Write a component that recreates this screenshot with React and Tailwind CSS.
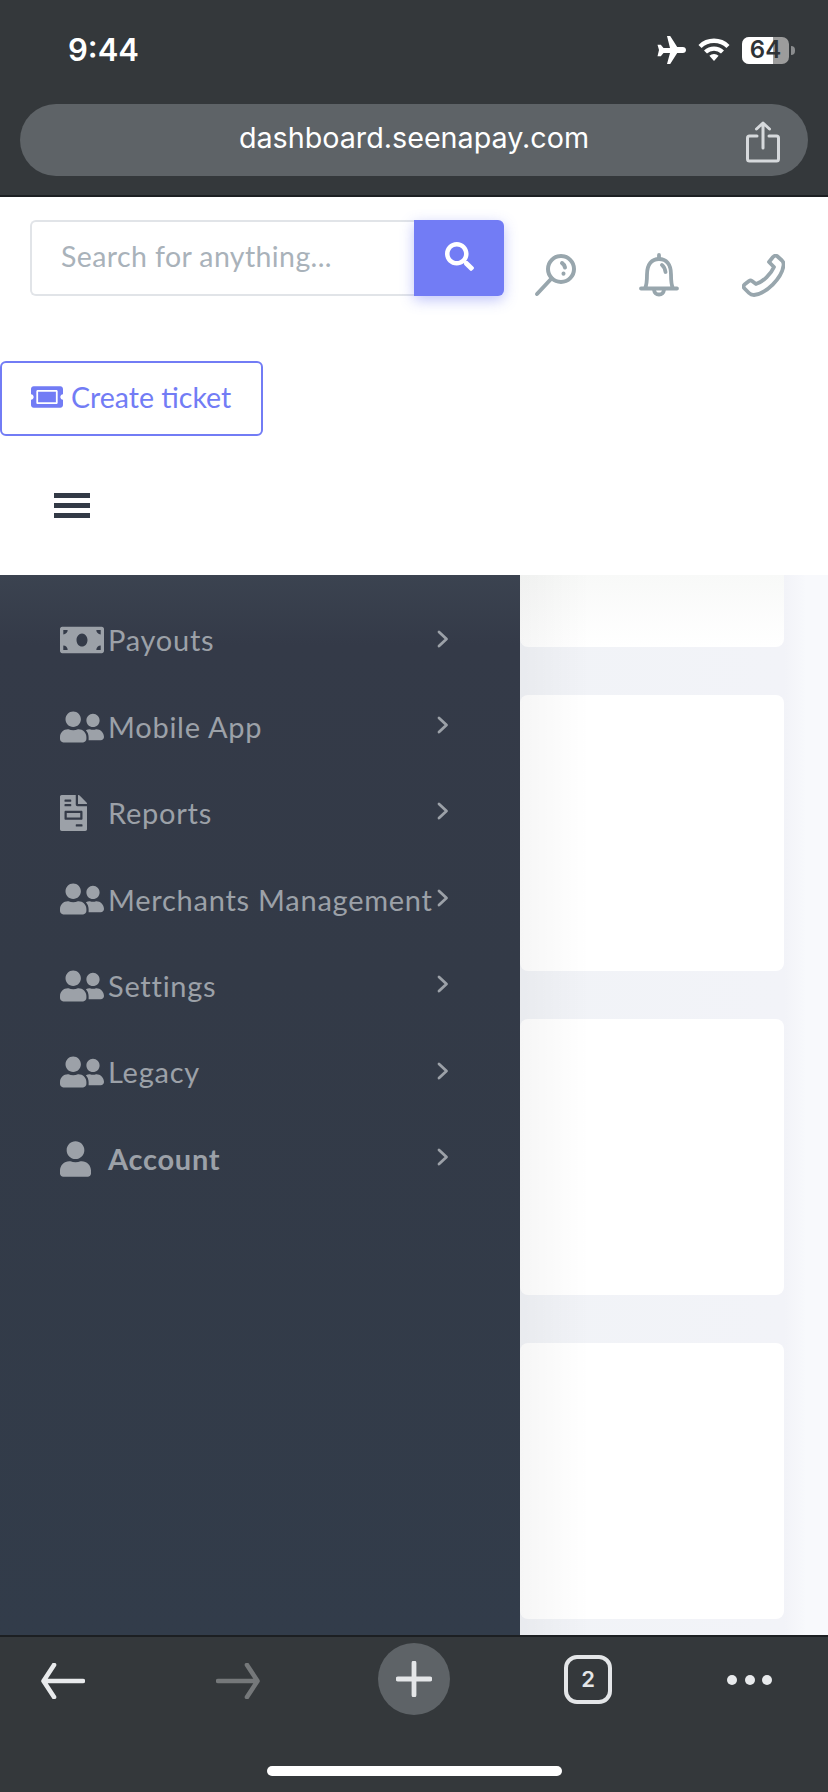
import { FaMoneyBill, FaUserFriends, FaFileInvoice, FaUser, FaSearch, FaTicketAlt } from "react-icons/fa";

const menu = [
  { label: "Payouts", icon: FaMoneyBill },
  { label: "Mobile App", icon: FaUserFriends },
  { label: "Reports", icon: FaFileInvoice, small: true },
  { label: "Merchants Management", icon: FaUserFriends },
  { label: "Settings", icon: FaUserFriends },
  { label: "Legacy", icon: FaUserFriends },
  { label: "Account", icon: FaUser, bold: true },
];

function Chevron() {
  return (
    <svg width="12" height="18" viewBox="0 0 12 18" fill="none" stroke="#9ca1a8" strokeWidth="2.8" strokeLinecap="round" strokeLinejoin="round" className="mb-[3px] shrink-0">
      <path d="M2 2l7.5 7L2 16" />
    </svg>
  );
}

function StatusBar() {
  return (
    <div className="flex h-[104px] items-start justify-between pl-[68px] pr-[33px] pt-[31px]">
      <span className="font-['Inter',sans-serif] text-[31px] leading-[37px] font-semibold text-white">9:44</span>
      <div className="flex items-center pt-[5px]">
        <svg width="30" height="28" viewBox="0 0 30 28" fill="white">
          <path d="M11 0h3.2l7 11h5.6c1.800 0 3.200 1.300 3.200 3s-1.400 3-3.200 3h-5.600l-7 11H11l3-11H7.500l-2.700 3.300H1.500L3 14 1.500 8.700h3.300L7.500 12H14z" />
        </svg>
        <svg width="32" height="24" viewBox="0 0 32 24" fill="none" stroke="white" strokeWidth="4.400" className="ml-[12px]">
          <path d="M2 8.500a20 20 0 0 1 28 0" />
          <path d="M7.500 14a12.500 12.500 0 0 1 17 0" />
          <path d="M16 23l-4.600-5.200a6.500 6.500 0 0 1 9.200 0z" fill="white" stroke="none" />
        </svg>
        <div className="relative ml-[12px] flex h-[27px] w-[47px] overflow-hidden rounded-[7px] bg-[#9c9c9c]">
          <div className="h-full w-[31px] bg-white"></div>
          <span className="absolute inset-0 flex items-center justify-center font-['Inter',sans-serif] text-[24px] font-semibold text-[#2f3336]">64</span>
        </div>
        <div className="ml-[2px] h-[9px] w-[4px] rounded-r-full bg-[#8a8c8e]"></div>
      </div>
    </div>
  );
}

function UrlBar() {
  return (
    <div className="relative mx-[20px] flex h-[72px] items-center justify-center rounded-[36px] bg-[#5e6367] pb-[4px]">
      <span className="font-['Inter',sans-serif] text-[28.700px] text-white">dashboard.seenapay.com</span>
      <svg width="34" height="42" viewBox="0 0 34 42" fill="none" stroke="#d6d9dc" strokeWidth="3" strokeLinecap="round" strokeLinejoin="round" className="absolute right-[28px] top-[17px]">
        <path d="M11 15H3.500a2 2 0 0 0-2 2v21a2 2 0 0 0 2 2h27a2 2 0 0 0 2-2V17a2 2 0 0 0-2-2H23" />
        <path d="M17 27V2M10.500 8L17 2l6.500 6" />
      </svg>
    </div>
  );
}

function TopIcons() {
  const cls = "fill-none stroke-[#98a6ad] shrink-0";
  return (
    <div className="ml-[30px] flex items-center gap-[63px] pt-[33px]">
      <svg width="42" height="43" viewBox="0 0 42 43" strokeWidth="4" strokeLinecap="round" strokeLinejoin="round" className={cls}>
        <circle cx="27" cy="15" r="13" />
        <path d="M17.500 24.500L3 40M28 9c1.500 1 2.500 2.500 3 4.500M29.500 19.500v.2" />
      </svg>
      <svg width="40" height="44" viewBox="0 0 40 44" strokeWidth="3.800" strokeLinecap="round" strokeLinejoin="round" className={cls}>
        <path d="M20 2v4M2 35.500h36M6 35.500c2-4 2-8 2-14C8 11 13 6 20 6s12 5 12 15.500c0 6 0 10 2 14M15 37c.5 3 2.500 4.500 5 4.500s4.500-1.500 5-4.500M23 12c2 1.500 3 4 3.500 7" />
      </svg>
      <svg width="43" height="43" viewBox="0 0 43 43" strokeWidth="3.800" strokeLinecap="round" strokeLinejoin="round" className={cls}>
        <path d="M27 8l4-5q2-2 4-1l5 4.500q2 2 1.500 5C40 24 24 40 12 41q-3 0-5-2l-4.500-4.500q-2-2 0-4L7 27q1.500-1 3 0l4 3C21 28 29 20 32 13z" />
      </svg>
    </div>
  );
}

function PageHeader() {
  return (
    <div className="flex h-[378px] flex-col bg-white">
      <div className="flex items-start pl-[30px] pt-[23px]">
        <div className="flex h-[76px] w-[384px] items-center rounded-l-[6px] border-2 border-r-0 border-[#e1e4e8] pb-[3px] pl-[29px]">
          <span className="font-['Lato',sans-serif] text-[28.500px] tracking-[0.4px] text-[#a9b2ba]">Search for anything...</span>
        </div>
        <div className="flex h-[76px] w-[90px] items-center justify-center rounded-r-[6px] bg-[#727cf5] shadow-[0_4px_14px_rgba(114,124,245,0.45)]">
          <FaSearch className="mb-[4px] text-[29px] text-white" />
        </div>
        <TopIcons />
      </div>
      <div className="mt-[64px] flex h-[75px] w-[263px] items-center gap-[8px] rounded-[6px] border-2 border-[#727cf5] pb-[3px] pl-[29px]">
        <FaTicketAlt className="h-[32px] w-[32px] text-[#727cf5]" />
        <span className="font-['Lato',sans-serif] text-[28.500px] text-[#727cf5]">Create ticket</span>
      </div>
      <div className="ml-[54px] mt-[57px] flex w-[36px] flex-col gap-[5px]">
        <div className="h-[5px] bg-[#323a46]"></div>
        <div className="h-[5px] bg-[#323a46]"></div>
        <div className="h-[5px] bg-[#323a46]"></div>
      </div>
    </div>
  );
}

function Sidebar() {
  return (
    <div className="w-[520px] shrink-0 bg-[linear-gradient(180deg,#3b4350_0px,#343a48_70px,#333a47_400px,#323c4a_100%)] pl-[60px] pr-[71px] pt-[22px]">
      {menu.map((item) => (
        <div key={item.label} className="flex h-[86.400px] items-center">
          <div className="flex w-[48px] shrink-0 items-center">
            <item.icon className={item.bold ? "h-[36px] w-[31px] text-[#9ca1a8]" : item.small ? "h-[36px] w-[27px] text-[#9ca1a8]" : "h-[36px] w-[44px] text-[#9ca1a8]"} />
          </div>
          <span className={`flex-1 whitespace-nowrap font-['Lato',sans-serif] text-[29px] tracking-[0.75px] text-[#9ca1a8] ${item.bold ? "font-bold" : ""}`}>{item.label}</span>
          <Chevron />
        </div>
      ))}
    </div>
  );
}

function Content() {
  return (
    <div className="relative flex-1 overflow-hidden bg-[linear-gradient(90deg,#f1f3f7_0%,#f2f3f8_86%,#f8f9fc_93%)]">
      <div className="flex flex-col gap-[48px] pr-[44px]">
        <div className="h-[72px] rounded-b-[8px] bg-[linear-gradient(180deg,#f8f9f8,#ffffff)]"></div>
        <div className="h-[276px] rounded-[8px] bg-white"></div>
        <div className="h-[276px] rounded-[8px] bg-white"></div>
        <div className="h-[276px] rounded-[8px] bg-white"></div>
      </div>
      <div className="absolute inset-y-0 left-0 w-[70px] bg-[linear-gradient(90deg,rgba(0,0,0,0.035),rgba(0,0,0,0))]"></div>
    </div>
  );
}

function BottomBar() {
  return (
    <div className="relative flex h-[157px] items-start border-t-2 border-[#1c1f22] bg-[#34383b] pl-[41px] pt-[6px]">
      <svg width="44" height="36" viewBox="0 0 44 36" fill="none" stroke="#e8eaec" strokeWidth="4.600" strokeLinecap="round" strokeLinejoin="round" className="mt-[20px] shrink-0">
        <path d="M42 18H3M13 2L2.500 18 13 34" />
      </svg>
      <svg width="44" height="36" viewBox="0 0 44 36" fill="none" stroke="#75787a" strokeWidth="4.600" strokeLinecap="round" strokeLinejoin="round" className="ml-[131px] mt-[20px] shrink-0">
        <path d="M2 18h39M31 2l10.500 16L31 34" />
      </svg>
      <div className="ml-[118px] flex h-[72px] w-[72px] shrink-0 items-center justify-center rounded-full bg-[#5e6367]">
        <svg width="36" height="36" viewBox="0 0 36 36" stroke="#e4e6e8" strokeWidth="4.800" strokeLinecap="round">
          <path d="M18 2v32M2 18h32" />
        </svg>
      </div>
      <div className="ml-[114px] mt-[12px] flex h-[49px] w-[48px] shrink-0 items-center justify-center rounded-[13px] border-[4px] border-[#e4e6e8]">
        <span className="font-['Inter',sans-serif] text-[22px] font-semibold text-[#e4e6e8]">2</span>
      </div>
      <div className="ml-[115px] mt-[32px] flex w-[45px] shrink-0 justify-between">
        <div className="h-[10px] w-[10px] rounded-full bg-[#e8eaec]"></div>
        <div className="h-[10px] w-[10px] rounded-full bg-[#e8eaec]"></div>
        <div className="h-[10px] w-[10px] rounded-full bg-[#e8eaec]"></div>
      </div>
      <div className="absolute left-[267px] top-[129px] h-[10px] w-[295px] rounded-full bg-white"></div>
    </div>
  );
}

export default function App() {
  return (
    <div className="flex h-[1792px] w-[828px] flex-col overflow-hidden bg-white">
      <div className="h-[197px] shrink-0 border-b-2 border-[#1c1f22] bg-[#34383b]">
        <StatusBar />
        <UrlBar />
      </div>
      <PageHeader />
      <div className="flex flex-1">
        <Sidebar />
        <Content />
      </div>
      <BottomBar />
    </div>
  );
}
